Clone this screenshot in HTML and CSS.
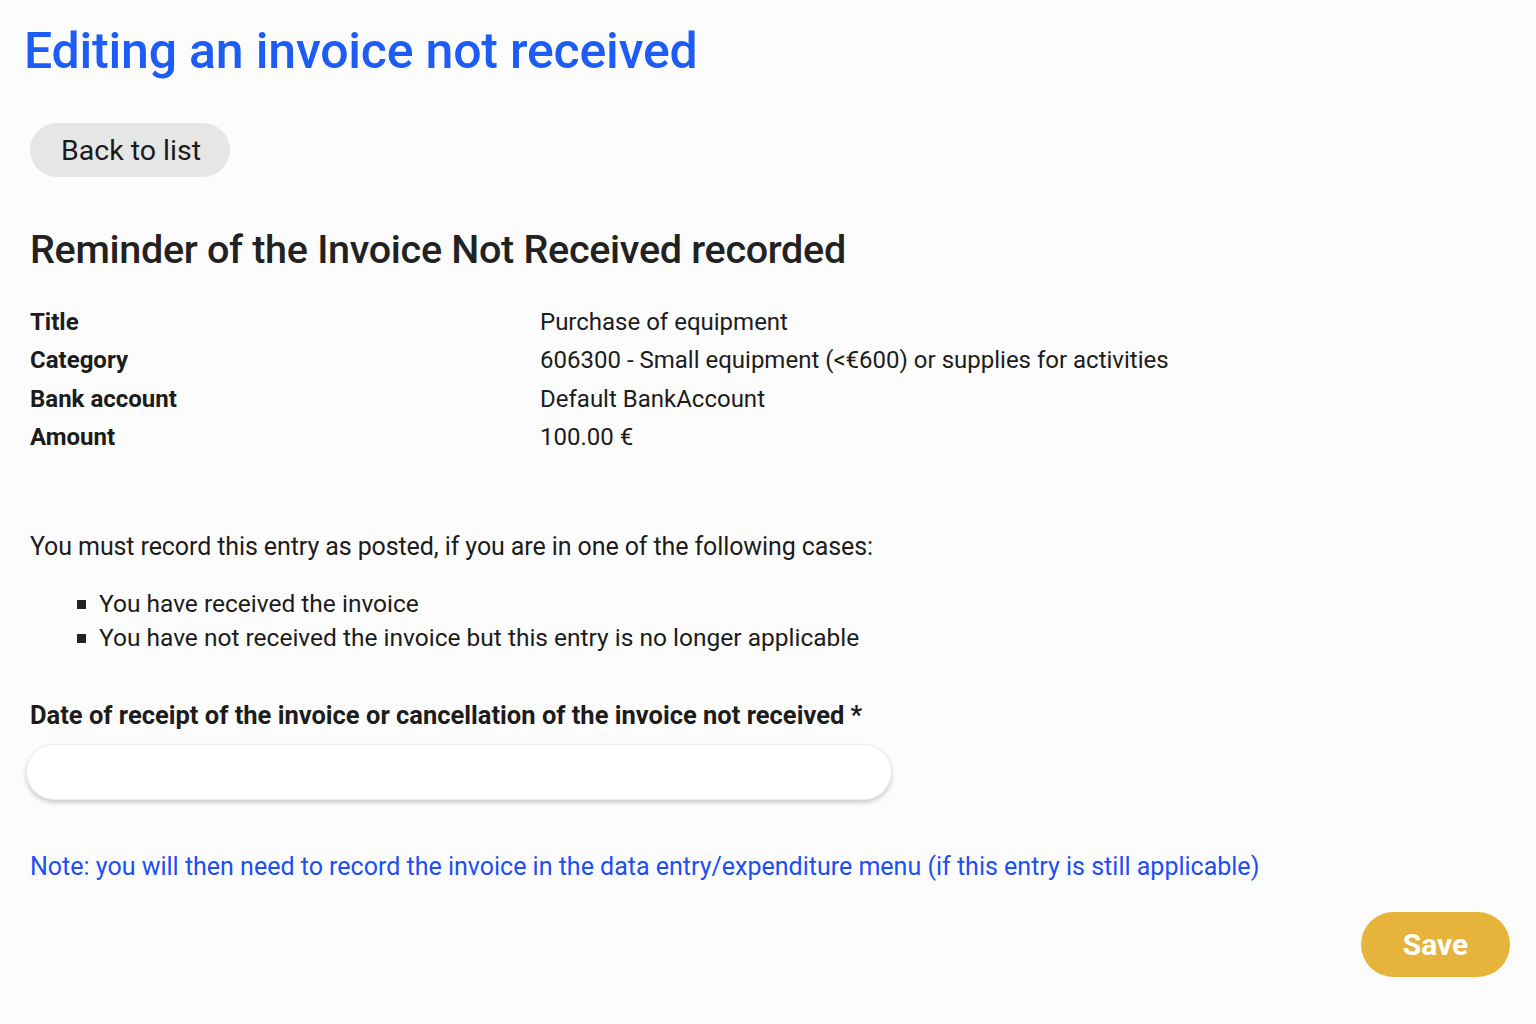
FILE: index.html
```html
<!DOCTYPE html>
<html lang="en">
<head>
<meta charset="utf-8">
<title>Editing an invoice not received</title>
<link rel="stylesheet" href="styles.css">
</head>
<body>
<main class="page">
  <h1 class="page-title">Editing an invoice not received</h1>
  <div class="back-row"><a class="btn-back" href="#">Back to list</a></div>
  <h2 class="section-title">Reminder of the Invoice Not Received recorded</h2>
  <dl class="details">
    <dt>Title</dt><dd>Purchase of equipment</dd>
    <dt>Category</dt><dd>606300 - Small equipment (&lt;€600) or supplies for activities</dd>
    <dt>Bank account</dt><dd>Default BankAccount</dd>
    <dt>Amount</dt><dd>100.00 €</dd>
  </dl>
  <p class="intro">You must record this entry as posted, if you are in one of the following cases:</p>
  <ul class="cases">
    <li>You have received the invoice</li>
    <li>You have not received the invoice but this entry is no longer applicable</li>
  </ul>
  <label class="field-label" for="date">Date of receipt of the invoice or cancellation of the invoice not received *</label>
  <input class="field-input" id="date" type="text">
  <p class="note">Note: you will then need to record the invoice in the data entry/expenditure menu (if this entry is still applicable)</p>
  <div class="actions"><button class="btn-save" type="button">Save</button></div>
</main>
</body>
</html>
```
FILE: styles.css
```css
html, body {
  margin: 0;
  padding: 0;
  background: #fcfcfc;
}
body {
  font-family: Roboto, "Liberation Sans", Arial, sans-serif;
  color: #1c1c1c;
}
.page {
  padding: 20px 26px 0 30px;
  display: flex;
  flex-direction: column;
}
.page-title {
  margin: 0 0 0 -6px;
  font-size: 50px;
  font-weight: 500;
  color: #1d5cf5;
  line-height: 62px;
  letter-spacing: -0.2px;
}
.back-row {
  margin-top: 41px;
  display: flex;
}
.btn-back {
  display: inline-flex;
  align-items: center;
  height: 54px;
  padding: 0 29px 0 31px;
  border-radius: 27px;
  background: #e6e6e6;
  color: #1a1a1a;
  font-size: 28.5px;
  text-decoration: none;
}
.section-title {
  margin: 48px 0 0 0;
  font-size: 39.5px;
  line-height: 50px;
  font-weight: 500;
  color: #222;
  letter-spacing: -0.3px;
}
.details {
  margin: 28px 0 0 0;
  display: grid;
  grid-template-columns: 510px 1fr;
  row-gap: 0;
  font-size: 24px;
  line-height: 38.3px;
}
.details dt {
  font-weight: 700;
}
.details dd {
  margin: 0;
}
.intro {
  margin: 74px 0 0 0;
  font-size: 25px;
  line-height: 34px;
  letter-spacing: -0.1px;
}
.cases {
  margin: 23px 0 0 0;
  padding: 0 0 0 69px;
  list-style: none;
  font-size: 24.5px;
  line-height: 34px;
}
.cases li {
  position: relative;
}
.cases li::before {
  content: "";
  position: absolute;
  left: -22px;
  top: 13px;
  width: 9px;
  height: 9px;
  background: #222;
}
.field-label {
  margin-top: 43px;
  font-size: 25.5px;
  line-height: 34px;
  font-weight: 700;
}
.field-input {
  margin: 12px 0 0 -4px;
  width: 866px;
  height: 56px;
  box-sizing: border-box;
  border: 1px solid #ececec;
  border-radius: 28px;
  background: #fff;
  box-shadow: 0 3px 4px rgba(0, 0, 0, 0.18);
  font-size: 24px;
  padding: 0 24px;
  outline: none;
}
.note {
  margin: 50px 0 0 0;
  font-size: 25px;
  line-height: 34px;
  color: #1d4ff5;
}
.actions {
  margin-top: 28px;
  display: flex;
  justify-content: flex-end;
}
.btn-save {
  width: 149px;
  height: 65px;
  border: none;
  border-radius: 33px;
  background: #e6b43b;
  color: #fff;
  font-family: Roboto, "Liberation Sans", Arial, sans-serif;
  font-size: 30px;
  font-weight: 700;
  margin-right: 0;
}
```
